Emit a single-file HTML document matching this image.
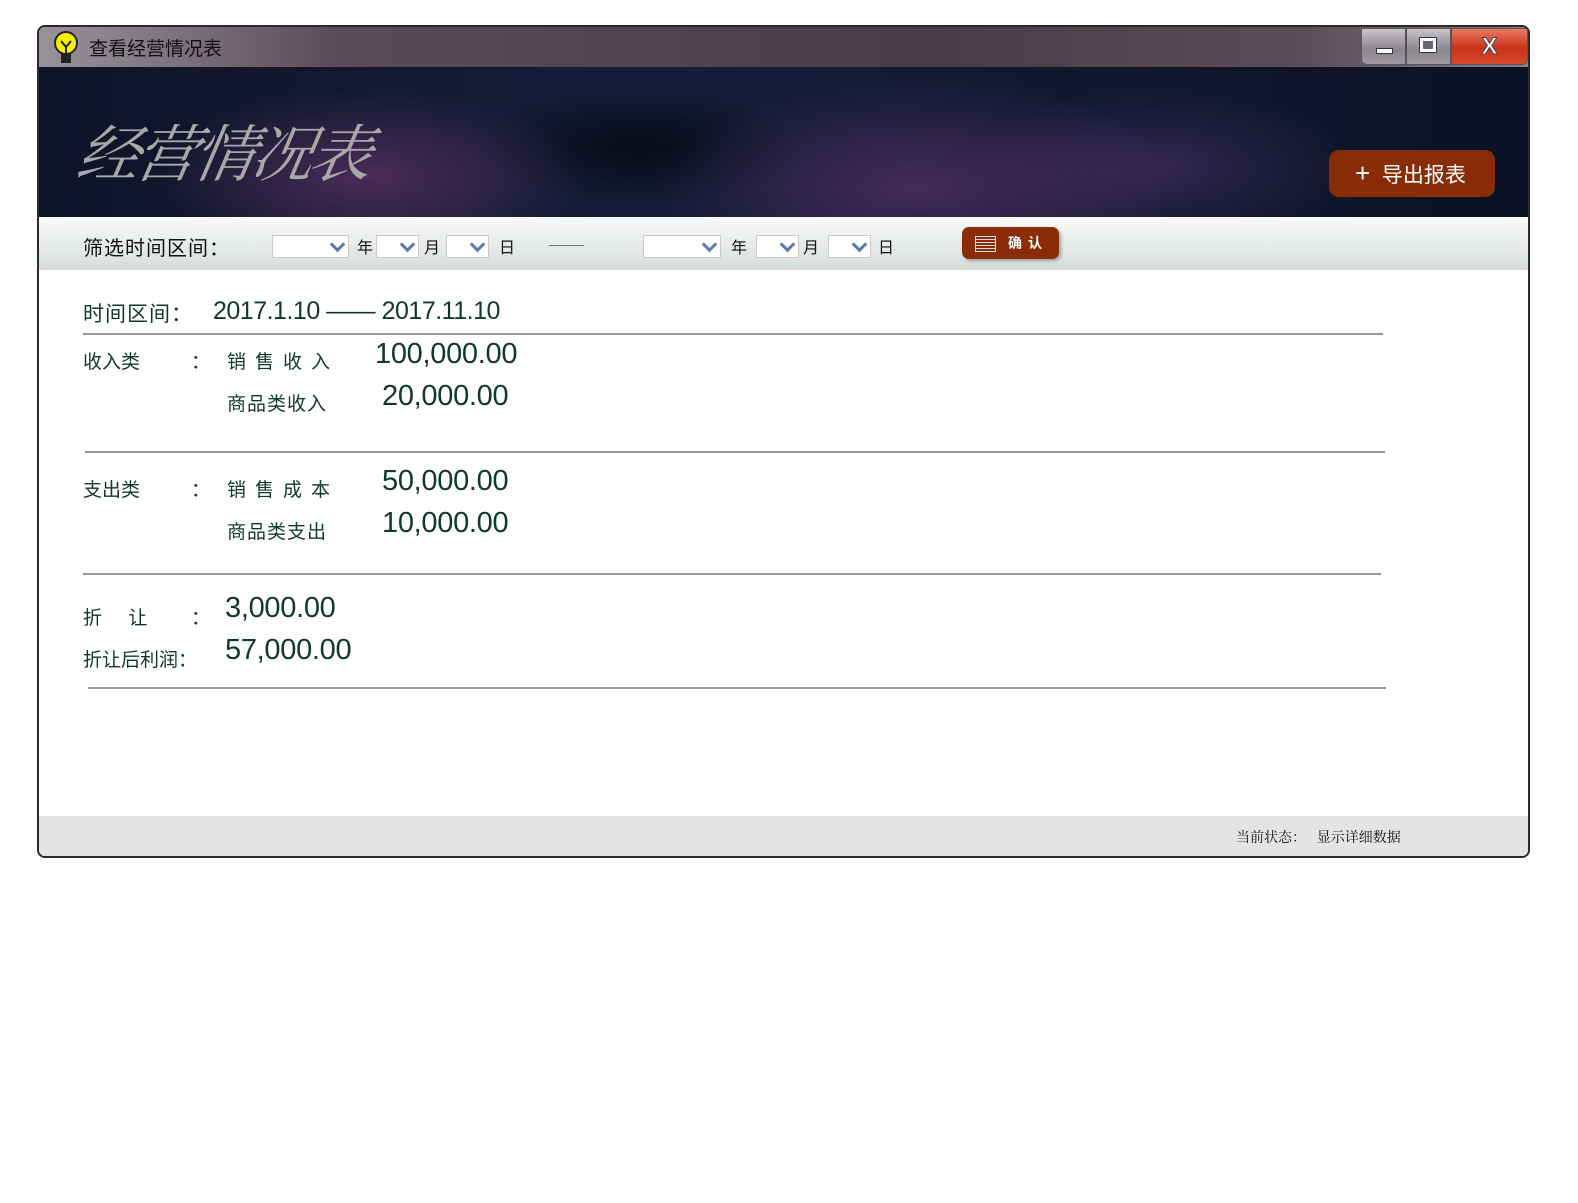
<!DOCTYPE html>
<html><head><meta charset="utf-8"><style>
*{margin:0;padding:0;box-sizing:border-box}
html,body{width:1578px;height:1203px;overflow:hidden}
body{background:#fff;position:relative;font-family:"Liberation Sans","Noto Sans CJK SC",sans-serif}
.a{position:absolute}
.win{left:37px;top:25px;width:1493px;height:833px;border:2px solid #2a2a2a;border-radius:8px;background:#fff;overflow:hidden}
.title{left:0;top:0;width:100%;height:40px;background:linear-gradient(90deg,#9a929a 0%,#5a4c56 20%,#4a3c46 60%,#5a4e56 85%,#8a8088 100%)}
.banner{left:0;top:40px;width:100%;height:150px;background:
radial-gradient(ellipse 220px 90px at 330px 110px,rgba(120,60,120,.55),transparent),
radial-gradient(ellipse 260px 110px at 880px 120px,rgba(120,60,130,.5),transparent),
radial-gradient(ellipse 200px 80px at 1120px 100px,rgba(100,60,130,.4),transparent),
radial-gradient(ellipse 160px 60px at 600px 80px,rgba(0,0,0,.6),transparent),
linear-gradient(90deg,#0e1428,#141c38 40%,#101830 70%,#0c1224)}
.filter{left:0;top:190px;width:100%;height:53px;background:linear-gradient(#fafbfb,#d6dcdc)}
.foot{left:0;top:789px;width:100%;height:42px;background:#e4e4e4}
.sel{height:23px;background:#fff;border:1px solid #cfcac4;top:208px}
.sel:after{content:"";position:absolute;right:5px;top:3px;width:8px;height:8px;border-right:3px solid #5a7aaa;border-bottom:3px solid #5a7aaa;transform:rotate(45deg)}
.f{font-size:16px;color:#111;top:207px}
.g{color:#0f3a2a}
.num{font-size:29px;font-family:"Liberation Sans",sans-serif;letter-spacing:-0.3px}
.hr{height:2px;background:#999}
</style></head><body>
<div class="a win">
 <div class="a title"></div>
 <svg class="a" style="left:14px;top:4px" width="26" height="34" viewBox="0 0 26 34"><ellipse cx="13" cy="12" rx="11" ry="11" fill="#f5f000" stroke="#222" stroke-width="2"/><path d="M8 10 L13 16 L18 10 M13 16 V24" stroke="#222" stroke-width="2" fill="none"/><rect x="8" y="22" width="10" height="10" fill="#222"/></svg>
 <div class="a" style="left:50px;top:7px;font-size:19px;color:#111">查看经营情况表</div>
 <div class="a" style="left:1322px;top:1px;width:45px;height:37px;background:linear-gradient(#c8c4c8,#8a8490 60%,#a09aa0);border:1px solid #555;border-radius:0 0 0 6px"></div>
 <div class="a" style="left:1337px;top:21px;width:17px;height:6px;background:#fff;border:1px solid #334"></div>
 <div class="a" style="left:1367px;top:1px;width:45px;height:37px;background:linear-gradient(#c8c4c8,#8a8490 60%,#a09aa0);border:1px solid #555"></div>
 <div class="a" style="left:1381px;top:11px;width:16px;height:14px;border:3px solid #fff;outline:1px solid #334;background:#667"></div>
 <div class="a" style="left:1412px;top:1px;width:77px;height:37px;background:linear-gradient(#e87a60,#c8321a 55%,#d84a2a);border:1px solid #555;border-radius:0 0 6px 0;color:#fff;font-size:24px;font-weight:bold;text-align:center;line-height:36px;-webkit-text-stroke:1px #445">X</div>
 <div class="a banner"></div>
 <div class="a" style="left:40px;top:78px;font-size:62px;color:#a8a8a8;font-family:'Noto Serif CJK SC',serif;font-style:italic;letter-spacing:-4px;transform:skewX(-10deg)">经营情况表</div>
 <div class="a" style="left:1290px;top:123px;width:166px;height:47px;background:#8a2c08;border-radius:10px;color:#fff;font-size:21px;line-height:46px;padding-left:26px"><span style="font-size:26px">+</span>&nbsp; 导出报表</div>
 <div class="a filter"></div>
 <div class="a" style="left:44px;top:205px;font-size:20px;color:#111;letter-spacing:1px">筛选时间区间：</div>
 <div class="a sel" style="left:233px;width:77px"></div><div class="a f" style="left:318px">年</div>
 <div class="a sel" style="left:337px;width:43px"></div><div class="a f" style="left:385px">月</div>
 <div class="a sel" style="left:407px;width:43px"></div><div class="a f" style="left:460px">日</div>
 <div class="a" style="left:510px;top:218px;width:35px;height:1px;background:#777"></div>
 <div class="a sel" style="left:604px;width:78px"></div><div class="a f" style="left:692px">年</div>
 <div class="a sel" style="left:717px;width:43px"></div><div class="a f" style="left:764px">月</div>
 <div class="a sel" style="left:789px;width:43px"></div><div class="a f" style="left:839px">日</div>
 <div class="a" style="left:923px;top:200px;width:97px;height:32px;background:#8a2c08;border-radius:7px;box-shadow:2px 2px 3px rgba(0,0,0,.3);color:#fff;font-size:14px;font-weight:bold;line-height:32px;padding-left:46px;letter-spacing:6px">确认</div>
 <div class="a" style="left:936px;top:209px;width:21px;height:16px;border:1px solid #ddd;background:repeating-linear-gradient(#8a2c08 0 2px,#ddd 2px 3px)"></div>

 <div class="a g" style="left:44px;top:271px;font-size:21px;letter-spacing:1px">时间区间：</div>
 <div class="a g" style="left:174px;top:270px;font-size:25px;font-family:'Liberation Sans',sans-serif;letter-spacing:-0.5px">2017.1.10 —— 2017.11.10</div>
 <div class="a hr" style="left:44px;top:306px;width:1300px"></div>
 <div class="a g" style="left:44px;top:320px;font-size:19px">收入类</div>
 <div class="a g" style="left:152px;top:320px;font-size:19px">：</div>
 <div class="a g" style="left:188px;top:320px;font-size:19px;letter-spacing:9px">销售收入</div>
 <div class="a g num" style="left:336px;top:311px">100,000.00</div>
 <div class="a g" style="left:188px;top:362px;font-size:19px;letter-spacing:1px">商品类收入</div>
 <div class="a g num" style="left:343px;top:353px">20,000.00</div>
 <div class="a hr" style="left:46px;top:424px;width:1300px"></div>
 <div class="a g" style="left:44px;top:448px;font-size:19px">支出类</div>
 <div class="a g" style="left:152px;top:448px;font-size:19px">：</div>
 <div class="a g" style="left:188px;top:448px;font-size:19px;letter-spacing:9px">销售成本</div>
 <div class="a g num" style="left:343px;top:438px">50,000.00</div>
 <div class="a g" style="left:188px;top:490px;font-size:19px;letter-spacing:1px">商品类支出</div>
 <div class="a g num" style="left:343px;top:480px">10,000.00</div>
 <div class="a hr" style="left:44px;top:546px;width:1298px"></div>
 <div class="a g" style="left:44px;top:576px;font-size:19px">折&nbsp;&nbsp;&nbsp;&nbsp;&nbsp;让</div>
 <div class="a g" style="left:152px;top:576px;font-size:19px">：</div>
 <div class="a g num" style="left:186px;top:565px">3,000.00</div>
 <div class="a g" style="left:44px;top:618px;font-size:19px">折让后利润：</div>
 <div class="a g num" style="left:186px;top:607px">57,000.00</div>
 <div class="a hr" style="left:49px;top:660px;width:1298px"></div>
 <div class="a foot"></div>
 <div class="a" style="left:1197px;top:800px;font-size:14px;color:#111;font-family:'Noto Serif CJK SC',serif">当前状态：&nbsp;&nbsp;&nbsp;显示详细数据</div>
</div>
</body></html>
